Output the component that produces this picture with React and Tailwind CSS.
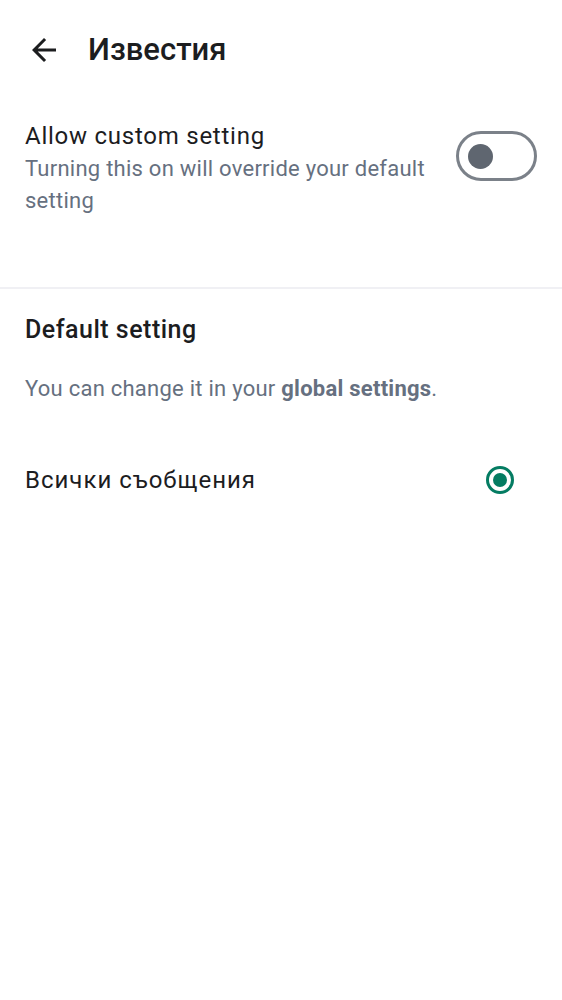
import React from "react";

export default function App() {
  const font = { fontFamily: "Roboto, 'Noto Sans', sans-serif" };
  return (
    <div className="w-[562px] h-[1000px] bg-white" style={font}>
      <div className="h-[98px] flex items-center pl-[26px] pt-[2px]">
        <svg width="36" height="36" viewBox="0 0 24 24" className="text-[#1c1d1f]">
          <path fill="currentColor" d="M20 11H7.83l5.59-5.59L12 4l-8 8 8 8 1.41-1.41L7.83 13H20v-2z" />
        </svg>
        <div className="ml-[26px] text-[31px] leading-[36px] font-medium text-[#1c1d1f]">Известия</div>
      </div>

      <div className="px-[25px] pt-[27px] pb-[70px] flex items-start gap-[24px] border-b-2 border-[#f0f0f4]">
        <div className="flex-1 flex flex-col">
          <div className="text-[24px] leading-[22px] text-[#1c1d1f] tracking-[0.75px]">Allow custom setting</div>
          <div className="mt-[6px] text-[22px] leading-[32px] text-[#667080] tracking-[0.25px]">
            Turning this on will override your default setting
          </div>
        </div>
        <div className="mt-[6px] w-[81px] h-[50px] rounded-full border-[3px] border-[#7b8189] flex items-center pl-[9px] shrink-0">
          <div className="w-[25px] h-[25px] rounded-full bg-[#5f6670]" />
        </div>
      </div>

      <div className="px-[25px] pt-[25px]">
        <div className="text-[25px] leading-[32px] font-medium text-[#1c1d1f] tracking-[0.5px]">Default setting</div>
        <div className="mt-[27px] text-[22px] leading-[32px] text-[#667080] tracking-[0.25px]">
          You can change it in your <span className="font-bold">global settings</span>.
        </div>
        <div className="mt-[59px] flex items-center justify-between">
          <div className="text-[24px] leading-[32px] text-[#1c1d1f] tracking-[1px]">Всички съобщения</div>
          <div className="mr-[23px] w-[28px] h-[28px] rounded-full border-[3px] border-[#047c62] flex items-center justify-center">
            <div className="w-[14px] h-[14px] rounded-full bg-[#047c62]" />
          </div>
        </div>
      </div>
    </div>
  );
}
